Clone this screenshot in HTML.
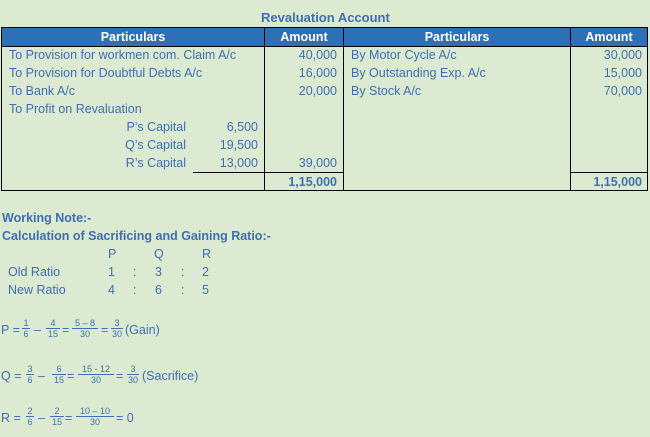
<!DOCTYPE html><html><head><style>
body{margin:0;width:650px;height:437px;background:#dbead0;font-family:"Liberation Sans",sans-serif;color:#3f6fb3;position:relative;overflow:hidden;font-size:12.5px}
.a{position:absolute;white-space:nowrap;line-height:14px}
.r{text-align:right}
.b{font-weight:bold}
.l{position:absolute;background:#000}
.h{position:absolute;background:#2e70b6;color:#fff;font-weight:bold;text-align:center;line-height:18px;top:28px;height:18px}
.f{position:absolute;font-size:9px;text-align:center;line-height:10px}
.f span{display:block;border-top:1px solid #3f6fb3}
</style></head><body>
<div class="a b" style="left:261px;top:11px;font-size:13px">Revaluation Account</div>
<div class="h" style="left:2px;width:262px">Particulars</div>
<div class="h" style="left:265px;width:78px">Amount</div>
<div class="h" style="left:344px;width:226px">Particulars</div>
<div class="h" style="left:571px;width:76px">Amount</div>
<div class="l" style="left:1px;top:27px;width:647px;height:1px"></div>
<div class="l" style="left:1px;top:46px;width:647px;height:1px"></div>
<div class="l" style="left:1px;top:190px;width:647px;height:1px"></div>
<div class="l" style="left:1px;top:27px;width:1px;height:164px"></div>
<div class="l" style="left:264px;top:27px;width:1px;height:164px"></div>
<div class="l" style="left:343px;top:27px;width:1px;height:164px"></div>
<div class="l" style="left:570px;top:27px;width:1px;height:164px"></div>
<div class="l" style="left:647px;top:27px;width:1px;height:164px"></div>
<div class="l" style="left:193px;top:172px;width:151px;height:1px"></div>
<div class="l" style="left:570px;top:172px;width:78px;height:1px"></div>
<div class="a" style="left:9px;top:48px">To Provision for workmen com. Claim A/c</div>
<div class="a" style="left:9px;top:66px">To Provision for Doubtful Debts A/c</div>
<div class="a" style="left:9px;top:84px">To Bank A/c</div>
<div class="a" style="left:9px;top:102px">To Profit on Revaluation</div>
<div class="a r" style="right:464px;top:120px">P’s Capital</div>
<div class="a r" style="right:464px;top:138px">Q’s Capital</div>
<div class="a r" style="right:464px;top:156px">R’s Capital</div>
<div class="a r" style="right:392px;top:120px">6,500</div>
<div class="a r" style="right:392px;top:138px">19,500</div>
<div class="a r" style="right:392px;top:156px">13,000</div>
<div class="a r" style="right:313px;top:48px">40,000</div>
<div class="a r" style="right:313px;top:66px">16,000</div>
<div class="a r" style="right:313px;top:84px">20,000</div>
<div class="a r" style="right:313px;top:156px">39,000</div>
<div class="a r b" style="right:313px;top:175px">1,15,000</div>
<div class="a" style="left:351px;top:48px">By Motor Cycle A/c</div>
<div class="a" style="left:351px;top:66px">By Outstanding Exp. A/c</div>
<div class="a" style="left:351px;top:84px">By Stock A/c</div>
<div class="a r" style="right:8px;top:48px">30,000</div>
<div class="a r" style="right:8px;top:66px">15,000</div>
<div class="a r" style="right:8px;top:84px">70,000</div>
<div class="a r b" style="right:8px;top:175px">1,15,000</div>
<div class="a b" style="left:2px;top:211px">Working Note:-</div>
<div class="a b" style="left:2px;top:229px">Calculation of Sacrificing and Gaining Ratio:-</div>
<div class="a" style="left:108px;top:247px">P</div><div class="a" style="left:154px;top:247px">Q</div><div class="a" style="left:202px;top:247px">R</div>
<div class="a" style="left:8px;top:265px">Old Ratio</div>
<div class="a" style="left:108px;top:265px">1</div><div class="a" style="left:133px;top:265px">:</div><div class="a" style="left:155px;top:265px">3</div><div class="a" style="left:181px;top:265px">:</div><div class="a" style="left:202px;top:265px">2</div>
<div class="a" style="left:8px;top:283px">New Ratio</div>
<div class="a" style="left:108px;top:283px">4</div><div class="a" style="left:133px;top:283px">:</div><div class="a" style="left:155px;top:283px">6</div><div class="a" style="left:181px;top:283px">:</div><div class="a" style="left:202px;top:283px">5</div>

<div class="a" style="left:1px;top:323px">P =</div>
<div class="f" style="left:22px;top:318px;width:8px">1<span>6</span></div>
<div class="a" style="left:34px;top:323px">–</div>
<div class="f" style="left:46px;top:318px;width:14px">4<span>15</span></div>
<div class="a" style="left:62px;top:323px">=</div>
<div class="f" style="left:72px;top:318px;width:26px">5 – 8<span>30</span></div>
<div class="a" style="left:101px;top:323px">=</div>
<div class="f" style="left:111px;top:318px;width:12px">3<span>30</span></div>
<div class="a" style="left:125px;top:323px">(Gain)</div>

<div class="a" style="left:1px;top:369px">Q =</div>
<div class="f" style="left:26px;top:364px;width:8px">3<span>6</span></div>
<div class="a" style="left:38px;top:369px">–</div>
<div class="f" style="left:52px;top:364px;width:14px">6<span>15</span></div>
<div class="a" style="left:67px;top:369px">=</div>
<div class="f" style="left:78px;top:364px;width:36px">15 - 12<span>30</span></div>
<div class="a" style="left:116px;top:369px">=</div>
<div class="f" style="left:127px;top:364px;width:12px">3<span>30</span></div>
<div class="a" style="left:142px;top:369px">(Sacrifice)</div>

<div class="a" style="left:1px;top:411px">R =</div>
<div class="f" style="left:26px;top:406px;width:8px">2<span>6</span></div>
<div class="a" style="left:38px;top:411px">–</div>
<div class="f" style="left:50px;top:406px;width:14px">2<span>15</span></div>
<div class="a" style="left:65px;top:411px">=</div>
<div class="f" style="left:76px;top:406px;width:38px">10 – 10<span>30</span></div>
<div class="a" style="left:116px;top:411px">= 0</div>
</body></html>
